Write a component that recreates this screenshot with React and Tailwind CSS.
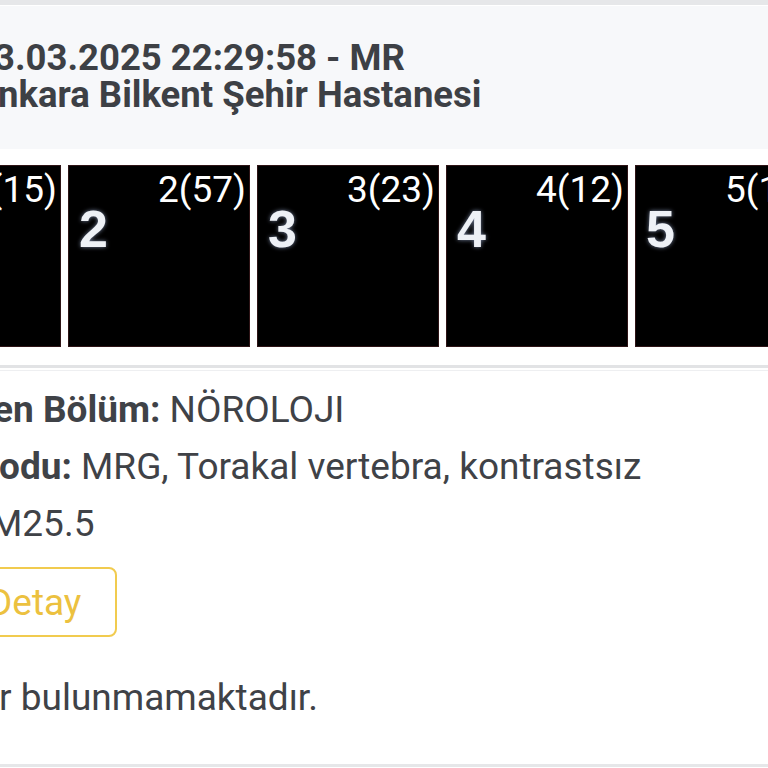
const thumbs = [
  { n: 1, count: 15 },
  { n: 2, count: 57 },
  { n: 3, count: 23 },
  { n: 4, count: 12 },
  { n: 5, count: 16 },
];

function Thumb({ n, count }) {
  return (
    <div className="relative w-[182px] h-[182px] shrink-0 bg-black border border-[#2e1416]">
      <span className="absolute right-[3px] top-[5px] text-[37px] leading-none text-white">
        {n}({count})
      </span>
      <span className="absolute left-[10px] top-[37px] font-['Liberation_Sans',Arial,sans-serif] font-bold text-[52px] leading-none text-[#eef1f6] [text-shadow:0_0_4px_rgba(190,210,255,0.6)]">
        {n}
      </span>
    </div>
  );
}

function Row({ pre, bold, value, shift }) {
  return (
    <p className={`whitespace-nowrap leading-[57px] ${shift}`}>
      <strong className="font-bold">
        <span className="inline-block w-[300px] -ml-[300px] text-right">{pre}</span>
        {bold}
      </strong>{' '}
      {value}
    </p>
  );
}

export default function App() {
  return (
    <div className="w-[768px] h-[768px] overflow-hidden bg-white font-['Roboto','Noto_Sans',sans-serif]">
      <div className="h-[5px] bg-[#e6e7e9]" />
      <div className="h-[147px] border-t border-white bg-[#f7f8fa] pt-[33px] border-b-[3px] border-[#e3e4e6] text-[#3d4045] text-[36.5px] leading-[37px] font-bold whitespace-nowrap">
        <div className="-ml-[6px]">
          <span className="inline-block w-[300px] -ml-[300px] text-right">1</span>3.03.2025 22:29:58 - MR
        </div>
        <div className="-ml-[2px]">
          <span className="inline-block w-[300px] -ml-[300px] text-right">A</span>nkara Bilkent Şehir Hastanesi
        </div>
      </div>

      <div className="flex gap-[7px] -ml-[121px] mt-[13px]">
        {thumbs.map(t => (
          <Thumb key={t.n} n={t.n} count={t.count} />
        ))}
      </div>

      <div className="mt-[18px] h-[3px] bg-[#e2e3e5]" />
      <div className="mt-[2px] h-px bg-[#eeeff1]" />

      <div className="pt-[10px] text-[37px] text-[#3f4247]">
        <Row pre="İstey" bold="en Bölüm:" value="NÖROLOJI" shift="-ml-[7px]" />
        <Row pre="Tetkik K" bold="odu:" value="MRG, Torakal vertebra, kontrastsız" shift="-ml-[1px]" />
        <p className="whitespace-nowrap leading-[57px] -ml-[10px]">
          <span className="inline-block w-[300px] -ml-[300px] text-right">
            <strong className="font-bold">Tanı:</strong>{' '}
          </span>
          M25.5
        </p>

        <button className="mt-[15px] -ml-[50px] h-[70px] pl-[36px] pr-[34px] flex items-center rounded-[8px] border-2 border-[#f1cb4f] text-[#ecc13f] text-[37px] leading-none">
          Detay
        </button>

        <p className="mt-[32px] whitespace-nowrap leading-[57px] -ml-[1px]">
          <span className="inline-block w-[300px] -ml-[300px] text-right">Rapo</span>r bulunmamaktadır.
        </p>
      </div>
      <div className="mt-[38px] h-[3px] bg-[#e6e7e9]" />
    </div>
  );
}
